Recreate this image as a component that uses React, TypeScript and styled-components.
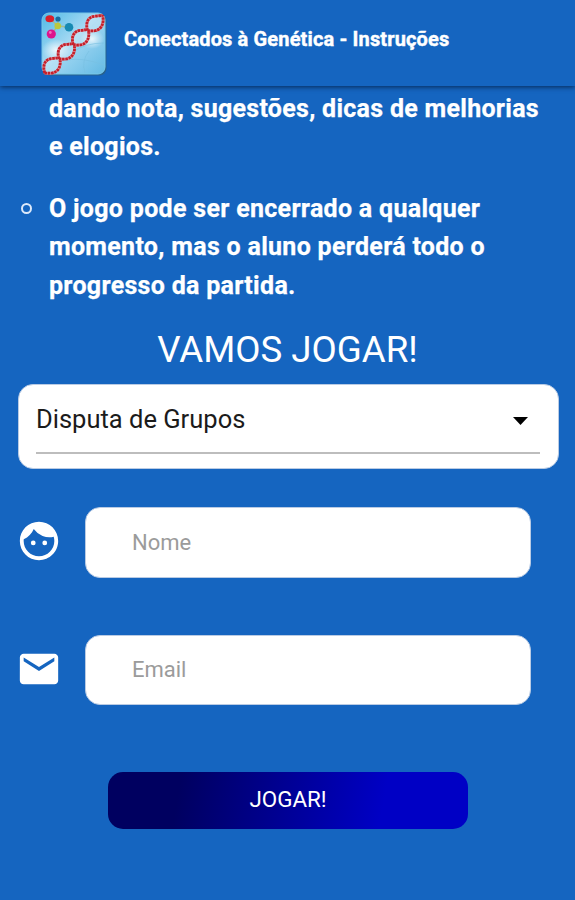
import React from "react";
import styled, { createGlobalStyle } from "styled-components";
import { MdEmail, MdFace } from "react-icons/md";

const GlobalStyle = createGlobalStyle`
  * { box-sizing: border-box; }
  html, body { margin: 0; background: #1565c0; }
  body { font-family: Roboto, "Liberation Sans", sans-serif; color: #fff; }
`;

const Page = styled.div`
  width: 575px;
  height: 900px;
  overflow: hidden;
  background: #1565c0;
`;

const Header = styled.header`
  height: 86px;
  display: flex;
  align-items: flex-start;
  padding: 12px 0 0 41px;
  box-shadow: 0 1px 5px rgba(0, 20, 50, 0.75);
`;

const Logo = styled.svg`
  width: 66px;
  height: 64px;
  flex: none;
`;

const Title = styled.h1`
  margin: 15px 0 0 17px;
  font-size: 20px;
  line-height: 24px;
  font-weight: 700;
  letter-spacing: 0.14px;
  -webkit-text-stroke: 0.4px #fff;
  white-space: nowrap;
`;

const Instructions = styled.ul`
  list-style: none;
  margin: 0;
  padding: 3.5px 0 0 49px;
  display: flex;
  flex-direction: column;
  gap: 24px;
`;

const Item = styled.li`
  position: relative;
  font-size: 25px;
  line-height: 38.3px;
  font-weight: 700;
  -webkit-text-stroke: 0.25px #fff;
`;

const Line = styled.span<{ $spacing: number }>`
  display: block;
  white-space: nowrap;
  letter-spacing: ${(p) => p.$spacing}px;
`;

const Bullet = styled.i`
  position: absolute;
  left: -28px;
  top: 13px;
  width: 11px;
  height: 11px;
  border: 2px solid #dce9fa;
  border-radius: 50%;
`;

const Heading = styled.h2`
  margin: 21.5px 0 0;
  height: 58px;
  line-height: 48px;
  font-size: 36.7px;
  font-weight: 400;
  text-align: center;
`;

const SelectBox = styled.div`
  width: 541px;
  height: 85px;
  margin-left: 18px;
  padding: 15px 18px 0 17px;
  border-radius: 15px;
  background: #fff;
  border: 1px solid #b9cbe4;
`;

const SelectValue = styled.div`
  height: 54px;
  display: flex;
  justify-content: space-between;
  align-items: flex-start;
  padding: 4px 12px 0 0;
  border-bottom: 2px solid #bdbdbd;
  color: #1b1b1b;
  font-size: 25.5px;
  line-height: 31px;
`;

const Arrow = styled.svg`
  width: 15px;
  height: 8px;
  margin-top: 13px;
`;

const Form = styled.form`
  display: flex;
  flex-direction: column;
  gap: 57px;
  margin-top: 38px;
`;

const Field = styled.label`
  display: flex;
  align-items: center;
  padding-left: 16px;
  svg { flex: none; width: 46px; height: 46px; margin-top: -3px; }
`;

const Input = styled.input`
  width: 446px;
  height: 70.4px;
  margin-left: 23px;
  padding: 0 46px 1px;
  border: 1px solid #b9cbe4;
  border-radius: 15px;
  background: #fff;
  outline: none;
  font: 400 22px Roboto, "Liberation Sans", sans-serif;
  &::placeholder { color: #9b9b9b; opacity: 1; }
`;

const Button = styled.button`
  width: 360px;
  height: 57px;
  margin: 10px 0 0 108px;
  padding: 0 0 4px;
  border: 0;
  border-radius: 15px;
  background: linear-gradient(100deg, #000060 20%, #0000c5 76%);
  color: #fff;
  font: 400 22.4px Roboto, "Liberation Sans", sans-serif;
`;

const STRAND_LEFT = "M1.5 0C-1-8 2-14 9-14.5Q14-15 16.5-15.5";
const STRAND_RIGHT = "M1.5 0Q5 .5 9 0C15-1 18.5-7 16.5-15.5";

function DnaLogo() {
  const loops = [0, 1, 2, 3];
  return (
    <Logo viewBox="0 0 66 64">
      <defs>
        <linearGradient id="sky" x1="0" y1="0" x2="1" y2="1">
          <stop offset="0" stopColor="#4fb9e6" />
          <stop offset="0.45" stopColor="#a5d9f3" />
          <stop offset="1" stopColor="#63bae4" />
        </linearGradient>
        <radialGradient id="glow">
          <stop offset="0" stopColor="#fff" stopOpacity="0.8" />
          <stop offset="1" stopColor="#fff" stopOpacity="0" />
        </radialGradient>
      </defs>
      <rect x="2" y="2" width="63.5" height="61.5" rx="7" fill="#28628d" />
      <rect x="1" y="1" width="63" height="61" rx="7" fill="url(#sky)" stroke="#79c8e9" />
      <ellipse cx="15" cy="38" rx="14" ry="11" fill="url(#glow)" />
      <ellipse cx="51" cy="27" rx="12" ry="10" fill="url(#glow)" />
      <path d="M32 40q12-9 31-9M44 61q-4-12 4-22M26 48q15-3 37 5" stroke="#78bfe1" strokeWidth="1" fill="none" opacity=".6" />
      <path d="M9 7l8 7 11 1M10 22l7-8V7" stroke="#a6bb8d" strokeWidth="1.5" fill="none" />
      <ellipse cx="8.8" cy="6.7" rx="4.4" ry="3.5" fill="#d91f2b" />
      <circle cx="17" cy="7" r="2.6" fill="#176a9f" />
      <circle cx="16.7" cy="14" r="3.3" fill="#bcc83b" />
      <circle cx="28" cy="15.3" r="4.3" fill="#168ab3" />
      <circle cx="10.3" cy="22" r="4.6" fill="#dc148d" />
      <circle cx="9.3" cy="20.5" r="1.4" fill="#f36abd" />
      {loops.map((i) => (
        <g key={i} transform={`translate(${2.2 + i * 14.3} ${61 - i * 14.1})`} fill="none" strokeWidth="2.8">
          <path d={STRAND_LEFT} fill="#d7edf8" fillOpacity=".4" stroke="#dd8f99" />
          <path d={STRAND_RIGHT} fill="#d7edf8" fillOpacity=".4" stroke="#dd8f99" />
          <path d={STRAND_LEFT} stroke="#c5202a" strokeDasharray="2.4 .8" />
          <path d={STRAND_RIGHT} stroke="#c5202a" strokeDasharray="2.4 .8" />
        </g>
      ))}
    </Logo>
  );
}

export default function App() {
  return (
    <>
      <GlobalStyle />
      <Page>
        <Header>
          <DnaLogo />
          <Title>Conectados à Genética - Instruções</Title>
        </Header>
        <Instructions>
          <Item>
            <Line $spacing={0.28}>dando nota, sugestões, dicas de melhorias</Line>
            <Line $spacing={0.28}>e elogios.</Line>
          </Item>
          <Item>
            <Bullet />
            <Line $spacing={0.3}>O jogo pode ser encerrado a qualquer</Line>
            <Line $spacing={0.3}>momento, mas o aluno perderá todo o</Line>
            <Line $spacing={0.3}>progresso da partida.</Line>
          </Item>
        </Instructions>
        <Heading>VAMOS JOGAR!</Heading>
        <SelectBox>
          <SelectValue>
            Disputa de Grupos
            <Arrow viewBox="0 0 15 8"><path d="M0 0h15L7.5 8z" fill="#000" /></Arrow>
          </SelectValue>
        </SelectBox>
        <Form>
          <Field><MdFace /><Input placeholder="Nome" /></Field>
          <Field><MdEmail /><Input placeholder="Email" /></Field>
          <Button type="button">JOGAR!</Button>
        </Form>
      </Page>
    </>
  );
}
